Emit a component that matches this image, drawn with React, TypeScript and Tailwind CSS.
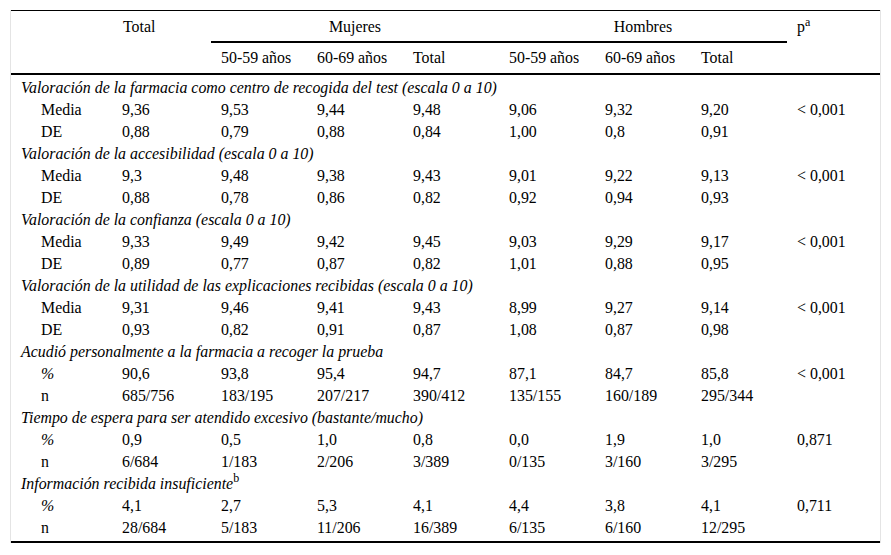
import React from "react";

const COLS = "grid grid-cols-[101px_99px_96px_96px_96px_96px_96px_96px_93px]";

type Group = { label: React.ReactNode; rows: { k: string; italic?: boolean; v: string[] }[] };

const groups: Group[] = [
  {
    label: "Valoración de la farmacia como centro de recogida del test (escala 0 a 10)",
    rows: [
      { k: "Media", v: ["9,36", "9,53", "9,44", "9,48", "9,06", "9,32", "9,20", "< 0,001"] },
      { k: "DE", v: ["0,88", "0,79", "0,88", "0,84", "1,00", "0,8", "0,91", ""] },
    ],
  },
  {
    label: "Valoración de la accesibilidad (escala 0 a 10)",
    rows: [
      { k: "Media", v: ["9,3", "9,48", "9,38", "9,43", "9,01", "9,22", "9,13", "< 0,001"] },
      { k: "DE", v: ["0,88", "0,78", "0,86", "0,82", "0,92", "0,94", "0,93", ""] },
    ],
  },
  {
    label: "Valoración de la confianza (escala 0 a 10)",
    rows: [
      { k: "Media", v: ["9,33", "9,49", "9,42", "9,45", "9,03", "9,29", "9,17", "< 0,001"] },
      { k: "DE", v: ["0,89", "0,77", "0,87", "0,82", "1,01", "0,88", "0,95", ""] },
    ],
  },
  {
    label: "Valoración de la utilidad de las explicaciones recibidas (escala 0 a 10)",
    rows: [
      { k: "Media", v: ["9,31", "9,46", "9,41", "9,43", "8,99", "9,27", "9,14", "< 0,001"] },
      { k: "DE", v: ["0,93", "0,82", "0,91", "0,87", "1,08", "0,87", "0,98", ""] },
    ],
  },
  {
    label: "Acudió personalmente a la farmacia a recoger la prueba",
    rows: [
      { k: "%", italic: true, v: ["90,6", "93,8", "95,4", "94,7", "87,1", "84,7", "85,8", "< 0,001"] },
      { k: "n", v: ["685/756", "183/195", "207/217", "390/412", "135/155", "160/189", "295/344", ""] },
    ],
  },
  {
    label: "Tiempo de espera para ser atendido excesivo (bastante/mucho)",
    rows: [
      { k: "%", italic: true, v: ["0,9", "0,5", "1,0", "0,8", "0,0", "1,9", "1,0", "0,871"] },
      { k: "n", v: ["6/684", "1/183", "2/206", "3/389", "0/135", "3/160", "3/295", ""] },
    ],
  },
  {
    label: (
      <>
        Información recibida insuficiente
        <sup className="text-[12px] top-[-6px] not-italic">b</sup>
      </>
    ),
    rows: [
      { k: "%", italic: true, v: ["4,1", "2,7", "5,3", "4,1", "4,4", "3,8", "4,1", "0,711"] },
      { k: "n", v: ["28/684", "5/183", "11/206", "16/389", "6/135", "6/160", "12/295", ""] },
    ],
  },
];

export default function App() {
  return (
    <div className="w-[891px] h-[555px] bg-white text-black font-['Liberation_Serif',serif] text-[15.9px] leading-none">
      <div className="pt-[10px] pl-[10px]">
        <div className="w-[871px] h-[533px] border-x border-[#e4e4e4]">
          <div className="border-t border-black">
            {/* header */}
            <div className={`${COLS} grid-rows-[32px_30px] border-b-2 border-black`}>
              <div className="row-span-2" />
              <div className="row-span-2 pl-[11px] pt-[8px]">Total</div>
              <div className="col-span-3 border-b-2 border-black flex items-start justify-center pt-[8px]">
                Mujeres
              </div>
              <div className="col-span-3 border-b-2 border-black flex items-start justify-center pt-[8px]">
                Hombres
              </div>
              <div className="row-span-2 pl-[10px] pt-[8px]">
                p<sup className="text-[12px] top-[-6px]">a</sup>
              </div>
              <div className="pl-[10px] flex items-center">50-59 años</div>
              <div className="pl-[10px] flex items-center">60-69 años</div>
              <div className="pl-[10px] flex items-center">Total</div>
              <div className="pl-[10px] flex items-center">50-59 años</div>
              <div className="pl-[10px] flex items-center">60-69 años</div>
              <div className="pl-[10px] flex items-center">Total</div>
            </div>
            {/* body */}
            <div className="pt-[2px]">
              {groups.map((g, gi) => (
                <React.Fragment key={gi}>
                  <div className="h-[22px] flex items-center pl-[10px] italic whitespace-nowrap">{g.label}</div>
                  {g.rows.map((r, ri) => (
                    <div key={ri} className={`${COLS} h-[22px] items-center`}>
                      <div className={`pl-[30px] ${r.italic ? "italic" : ""}`}>{r.k}</div>
                      {r.v.map((c, ci) => (
                        <div key={ci} className="pl-[10px] whitespace-nowrap">
                          {c}
                        </div>
                      ))}
                    </div>
                  ))}
                </React.Fragment>
              ))}
            </div>
            <div className="mt-[2px] border-b-[2px] border-black" />
          </div>
        </div>
      </div>
    </div>
  );
}
